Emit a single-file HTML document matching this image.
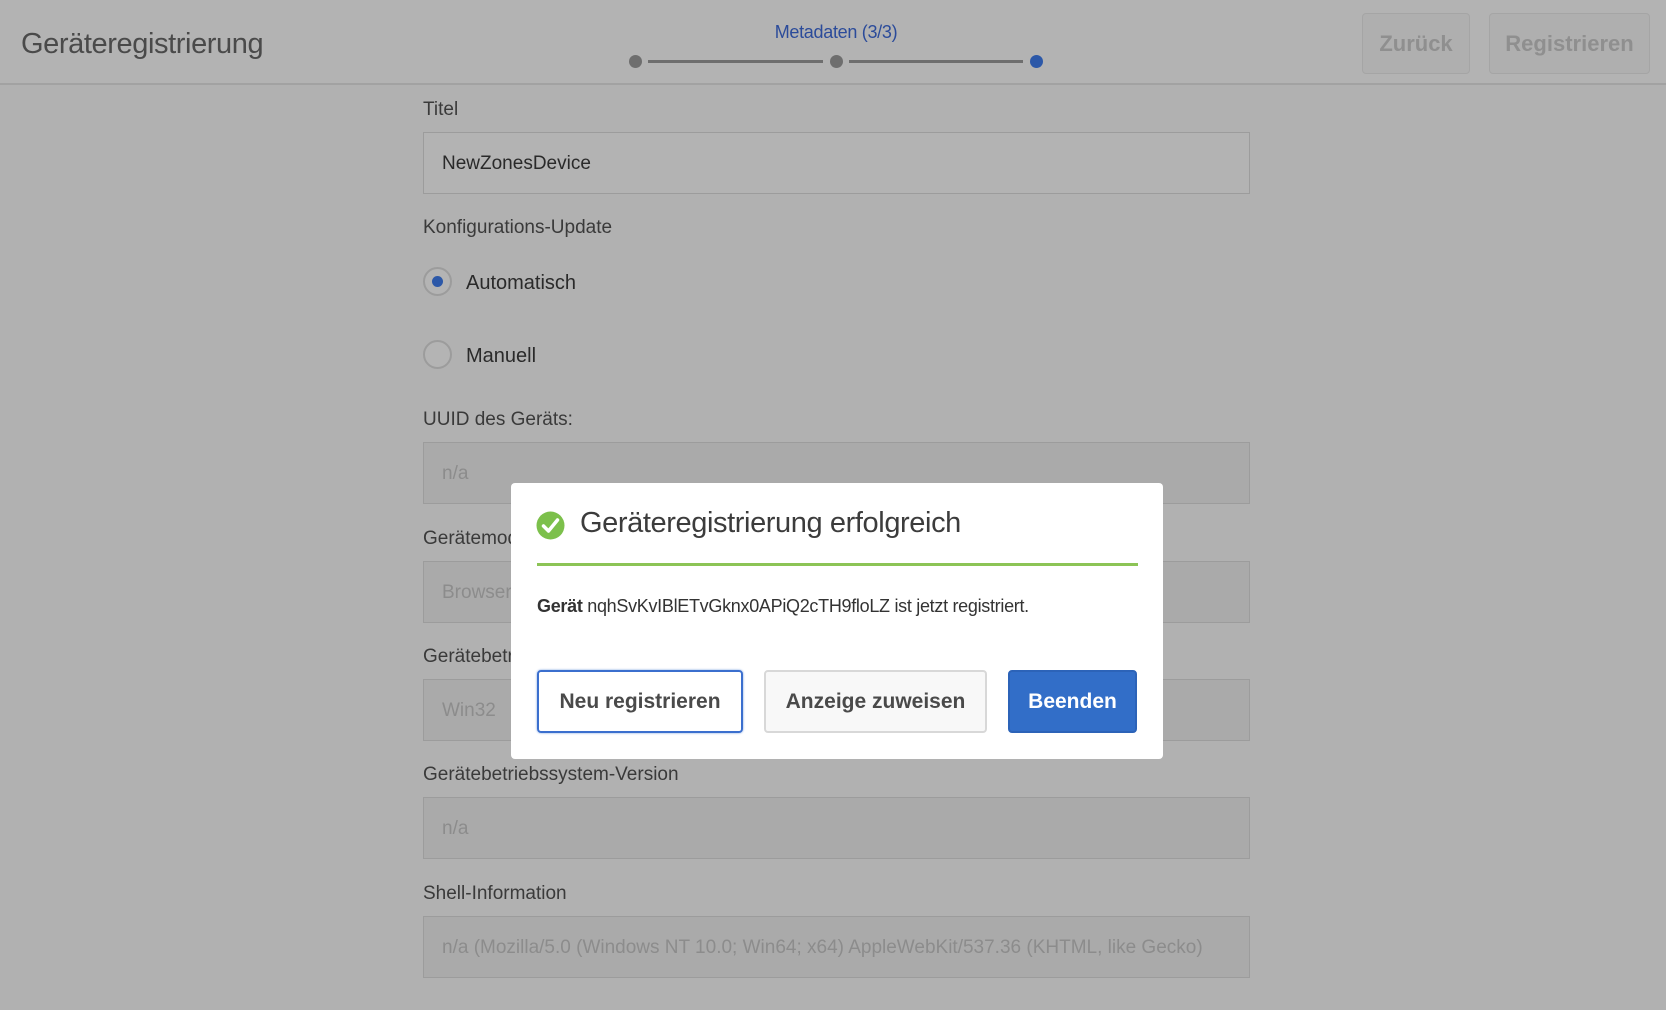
<!DOCTYPE html>
<html><head><meta charset="utf-8"><style>
*{box-sizing:border-box;margin:0;padding:0}
body{width:1666px;height:1010px;background:#b1b1b1;font-family:"Liberation Sans",sans-serif;position:relative;overflow:hidden;color:#333}
.a{position:absolute}
.hdr{left:0;top:0;width:1666px;height:85px;background:#b3b3b3;border-bottom:2px solid #a2a2a2}
.lbl{left:423px;font-size:19px;color:#3a3a3a}
.inp{left:423px;width:827px;height:62px;border:1px solid #9c9c9c;background:#aaaaaa;font-size:19px;color:#8c8c8c;padding-left:18px;line-height:62px;white-space:nowrap;overflow:hidden}
.btnh{height:61px;border:1px solid #a5a5a5;border-radius:4px;background:#afafaf;color:#8f8f8f;font-weight:bold;font-size:22px;text-align:center;line-height:59px}
.dot{width:13px;height:13px;border-radius:50%;background:#6e6e6e;top:55px}
.line{height:3px;background:#6e6e6e;top:60px}
.radio{width:29px;height:29px;border-radius:50%;border:2px solid #9c9c9c;background:#b4b4b4}
.dlg{left:511px;top:483px;width:652px;height:276px;background:#fff;border-radius:4px}
.b{position:absolute;top:187px;height:63px;border-radius:4px;font-weight:bold;font-size:21px;text-align:center;line-height:59px}
</style></head><body>
<div class="a hdr"></div>
<div class="a" style="left:21px;top:28px;font-size:29px;color:#4a4a4a;letter-spacing:-0.4px">Geräteregistrierung</div>
<div class="a" style="left:736px;top:22px;width:200px;text-align:center;font-size:18px;color:#2b4b9a;letter-spacing:-0.3px">Metadaten (3/3)</div>
<div class="a dot" style="left:629px"></div>
<div class="a line" style="left:648px;width:175px"></div>
<div class="a dot" style="left:830px"></div>
<div class="a line" style="left:849px;width:174px"></div>
<div class="a dot" style="left:1030px;background:#2c58a8"></div>
<div class="a btnh" style="left:1362px;top:13px;width:108px">Zurück</div>
<div class="a btnh" style="left:1489px;top:13px;width:161px">Registrieren</div>

<div class="a lbl" style="top:99px">Titel</div>
<div class="a inp" style="top:132px;color:#2a2a2a;background:#b3b3b3">NewZonesDevice</div>
<div class="a lbl" style="top:217px">Konfigurations-Update</div>
<div class="a radio" style="left:423px;top:267px"></div>
<div class="a" style="left:432px;top:276px;width:11px;height:11px;border-radius:50%;background:#2c58a8"></div>
<div class="a lbl" style="left:466px;top:272px;font-size:20px;color:#2a2a2a">Automatisch</div>
<div class="a radio" style="left:423px;top:340px"></div>
<div class="a lbl" style="left:466px;top:345px;font-size:20px;color:#2a2a2a">Manuell</div>
<div class="a lbl" style="top:409px">UUID des Geräts:</div>
<div class="a inp" style="top:442px">n/a</div>
<div class="a lbl" style="top:528px">Gerätemodell</div>
<div class="a inp" style="top:561px">Browser</div>
<div class="a lbl" style="top:646px">Gerätebetriebssystem</div>
<div class="a inp" style="top:679px">Win32</div>
<div class="a lbl" style="top:764px">Gerätebetriebssystem-Version</div>
<div class="a inp" style="top:797px">n/a</div>
<div class="a lbl" style="top:883px">Shell-Information</div>
<div class="a inp" style="top:916px">n/a (Mozilla/5.0 (Windows NT 10.0; Win64; x64) AppleWebKit/537.36 (KHTML, like Gecko)</div>

<div class="a dlg">
 <svg class="a" style="left:25px;top:28px" width="29" height="29" viewBox="0 0 29 29"><circle cx="14.5" cy="14.5" r="14" fill="#7cc04b"/><path d="M7.5 15l5 5 9-11" stroke="#fff" stroke-width="3.5" fill="none" stroke-linecap="round" stroke-linejoin="round"/></svg>
 <div class="a" style="left:69px;top:24px;font-size:29px;color:#3c3c3c;white-space:nowrap;letter-spacing:-0.4px">Geräteregistrierung erfolgreich</div>
 <div class="a" style="left:26px;top:80px;width:601px;height:3px;background:#8cc456"></div>
 <div class="a" style="left:26px;top:113px;font-size:18px;color:#333;white-space:nowrap;letter-spacing:-0.3px"><b>Gerät</b> nqhSvKvIBlETvGknx0APiQ2cTH9floLZ ist jetzt registriert.</div>
 <div class="b" style="left:26px;width:206px;border:2px solid #3b6fce;box-shadow:0 0 2px #7aa0e0;color:#4a4a4a">Neu registrieren</div>
 <div class="b" style="left:253px;width:223px;border:2px solid #d8d8d8;background:#f8f8f8;color:#4a4a4a">Anzeige zuweisen</div>
 <div class="b" style="left:497px;width:129px;background:#326ec8;color:#fff;border:2px solid #2c63b8">Beenden</div>
</div>
</body></html>
